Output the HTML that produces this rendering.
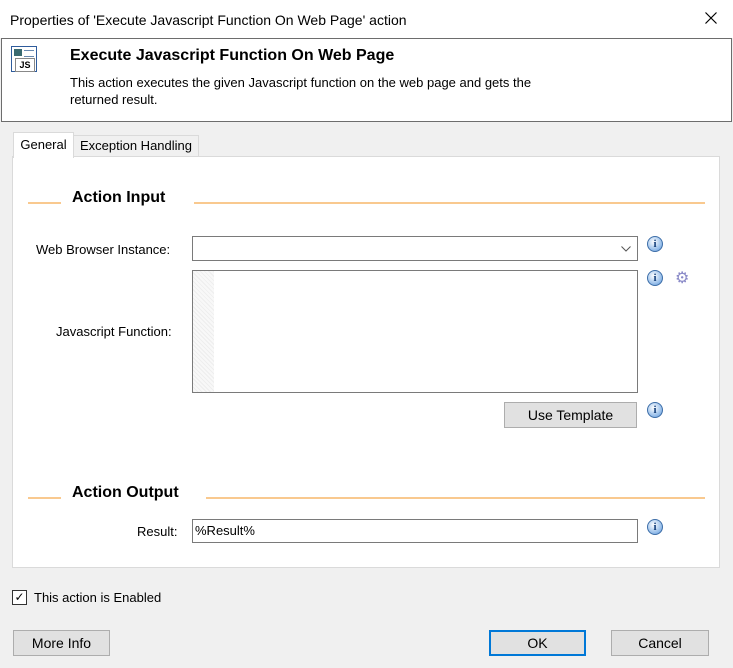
<!DOCTYPE html>
<html><head><style>
body{margin:0;width:733px;height:668px;background:#f0f0f0;font-family:"Liberation Sans",sans-serif;font-size:13px;color:#000;position:relative;overflow:hidden}
.a{position:absolute}
.btn{position:absolute;background:#e1e1e1;border:1px solid #adadad;text-align:center;line-height:24px;box-sizing:border-box;height:26px;font-size:14px}
.info{position:absolute;width:14px;height:14px;border-radius:50%;background:radial-gradient(circle at 40% 35%,#fff,#8db8e8 70%,#4a7fc0);border:1px solid #3d6ea8;color:#123e7a;font-size:11px;font-weight:bold;text-align:center;line-height:14px;font-family:"Liberation Serif",serif}
.line{position:absolute;height:2px;background:#f9c98f}
.sec{position:absolute;font-size:16px;font-weight:bold}
.inp{position:absolute;background:#fff;border:1px solid #7a7a7a;box-sizing:border-box}
</style></head><body>
<div class="a" style="left:0;top:0;width:733px;height:38px;background:#fff"></div>
<div class="a" style="left:10px;top:12px;font-size:14px">Properties of 'Execute Javascript Function On Web Page' action</div>
<svg class="a" style="left:705px;top:12px" width="12" height="12"><path d="M0.5 0.5L11.5 11.5M11.5 0.5L0.5 11.5" stroke="#000" stroke-width="1.2"/></svg>
<div class="a" style="left:1px;top:38px;width:729px;height:82px;background:#fff;border:1px solid #6d6d6d"></div>
<div class="a" style="left:11px;top:46px;width:26px;height:26px;background:#fff;border:1px solid #2f5c9c;box-sizing:border-box">
 <div class="a" style="left:2px;top:2px;width:8px;height:7px;background:#3a6a70"></div>
 <div class="a" style="left:12px;top:3px;width:10px;height:5px;border-top:1px solid #6a8ab0;border-bottom:1px solid #6a8ab0"></div>
 <div class="a" style="left:3px;top:11px;width:18px;height:12px;border:1px solid #888;font-size:9px;font-weight:bold;text-align:center;line-height:12px">JS</div>
</div>
<div class="a" style="left:70px;top:47px;font-size:16px;font-weight:bold">Execute Javascript Function On Web Page</div>
<div class="a" style="left:70px;top:74px;line-height:17px">This action executes the given Javascript function on the web page and gets the<br>returned result.</div>
<div class="a" style="left:12px;top:156px;width:706px;height:410px;background:#fff;border:1px solid #dadada"></div>
<div class="a" style="left:13px;top:132px;width:59px;height:25px;background:#fff;border:1px solid #dadada;border-bottom:none;text-align:center;line-height:24px">General</div>
<div class="a" style="left:73px;top:135px;width:124px;height:20px;background:#f0f0f0;border:1px solid #dadada;text-align:center;line-height:20px">Exception Handling</div>
<div class="line" style="left:28px;top:202px;width:33px"></div>
<div class="sec" style="left:72px;top:189px">Action Input</div>
<div class="line" style="left:194px;top:202px;width:511px"></div>
<div class="a" style="left:36px;top:242px">Web Browser Instance:</div>
<div class="inp" style="left:192px;top:236px;width:446px;height:25px"><svg class="a" style="right:6px;top:9px" width="10" height="6"><path d="M0.5 0.5L5 5L9.5 0.5" stroke="#555" fill="none"/></svg></div>
<div class="info" style="left:647px;top:236px">i</div>
<div class="a" style="left:56px;top:324px">Javascript Function:</div>
<div class="inp" style="left:192px;top:270px;width:446px;height:123px"><div class="a" style="left:0;top:0;width:21px;height:121px;background:repeating-linear-gradient(45deg,#eee 0 1px,#f8f8f8 1px 3px)"></div></div>
<div class="info" style="left:647px;top:270px">i</div>
<div class="a" style="left:675px;top:268px;color:#8a8ac8;font-size:16px">⚙</div>
<div class="btn" style="left:504px;top:402px;width:133px">Use Template</div>
<div class="info" style="left:647px;top:402px">i</div>
<div class="line" style="left:28px;top:497px;width:33px"></div>
<div class="sec" style="left:72px;top:484px">Action Output</div>
<div class="line" style="left:206px;top:497px;width:499px"></div>
<div class="a" style="left:137px;top:524px">Result:</div>
<div class="inp" style="left:192px;top:519px;width:446px;height:24px;padding:3px 0 0 2px">%Result%</div>
<div class="info" style="left:647px;top:519px">i</div>
<div class="a" style="left:12px;top:590px;width:13px;height:13px;border:1px solid #333;background:#fff;font-size:12px;line-height:13px;text-align:center">✓</div>
<div class="a" style="left:34px;top:590px">This action is Enabled</div>
<div class="btn" style="left:13px;top:630px;width:97px">More Info</div>
<div class="btn" style="left:489px;top:630px;width:97px;border:2px solid #0078d7;line-height:22px">OK</div>
<div class="btn" style="left:611px;top:630px;width:98px">Cancel</div>
</body></html>
